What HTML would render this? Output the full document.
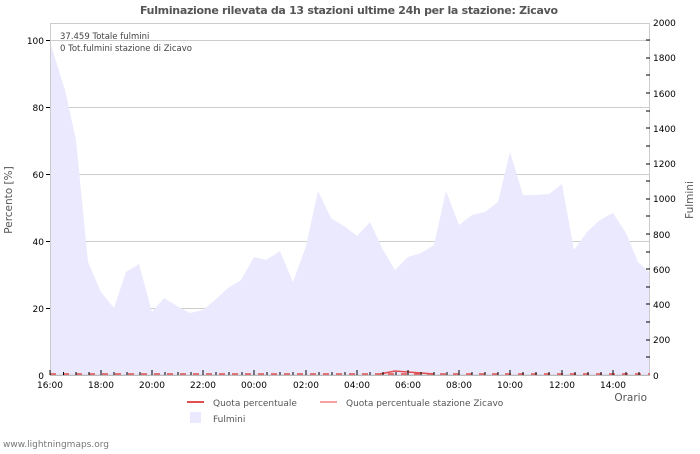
<!DOCTYPE html>
<html><head><style>
body{margin:0;background:#fff;width:700px;height:450px;overflow:hidden;font-family:"DejaVu Sans","Liberation Sans",sans-serif}
</style></head><body>
<svg width="700" height="450" xmlns="http://www.w3.org/2000/svg" font-family="DejaVu Sans, Liberation Sans, sans-serif">
<text x="349" y="14" text-anchor="middle" font-size="11" font-weight="bold" fill="#555" textLength="418">Fulminazione rilevata da 13 stazioni ultime 24h per la stazione: Zicavo</text>
<g stroke="#ccc" stroke-width="1">
<line x1="50" y1="40.5" x2="650" y2="40.5"/><line x1="50" y1="107.5" x2="650" y2="107.5"/><line x1="50" y1="174.5" x2="650" y2="174.5"/><line x1="50" y1="241.5" x2="650" y2="241.5"/><line x1="50" y1="308.5" x2="650" y2="308.5"/>
</g>
<polygon fill="#ebe9fd" points="50,375 50,42 65,90 76,140 88,262 101,292 114,308 126,272 139,264 152,312 164,298 177,306 190,313 203,310 215,300 228,288 241,280 254,257 266,260 280,251 293,282 306,246 318,191 331,218 344,226 357,236 370,222 382,248 395,270 408,257 421,253 434,245 446,191 459,225 472,215 485,212 498,202 510,152 523,195 536,195 549,194 562,184 574,250 587,232 600,220 613,213 626,233 638,262 649,272 649,375"/>
<rect x="50.5" y="23.5" width="599" height="351.5" fill="none" stroke="#ccc"/>
<g stroke="#e05050" stroke-width="1.5">
<line x1="50" y1="374" x2="650" y2="374" stroke-dasharray="6,7"/>
<polyline fill="none" points="380,374 395,371 408,372 421,373 434,374"/>
</g>
<line x1="50" y1="375.5" x2="650" y2="375.5" stroke="#bbb"/>
<g stroke="#000" stroke-width="1">
<line x1="50" y1="370" x2="50" y2="375"/><line x1="101" y1="370" x2="101" y2="375"/><line x1="152" y1="370" x2="152" y2="375"/><line x1="203" y1="370" x2="203" y2="375"/><line x1="254" y1="370" x2="254" y2="375"/><line x1="306" y1="370" x2="306" y2="375"/><line x1="357" y1="370" x2="357" y2="375"/><line x1="408" y1="370" x2="408" y2="375"/><line x1="459" y1="370" x2="459" y2="375"/><line x1="510" y1="370" x2="510" y2="375"/><line x1="562" y1="370" x2="562" y2="375"/><line x1="613" y1="370" x2="613" y2="375"/>
</g>
<g stroke="#000" stroke-width="1">
<line x1="63.5" y1="372" x2="63.5" y2="375"/><line x1="76" y1="372" x2="76" y2="375"/><line x1="89" y1="372" x2="89" y2="375"/><line x1="114" y1="372" x2="114" y2="375"/><line x1="127" y1="372" x2="127" y2="375"/><line x1="140" y1="372" x2="140" y2="375"/><line x1="165" y1="372" x2="165" y2="375"/><line x1="178" y1="372" x2="178" y2="375"/><line x1="191" y1="372" x2="191" y2="375"/><line x1="216" y1="372" x2="216" y2="375"/><line x1="229" y1="372" x2="229" y2="375"/><line x1="242" y1="372" x2="242" y2="375"/><line x1="267" y1="372" x2="267" y2="375"/><line x1="280" y1="372" x2="280" y2="375"/><line x1="293" y1="372" x2="293" y2="375"/><line x1="319" y1="372" x2="319" y2="375"/><line x1="332" y1="372" x2="332" y2="375"/><line x1="345" y1="372" x2="345" y2="375"/><line x1="370" y1="372" x2="370" y2="375"/><line x1="383" y1="372" x2="383" y2="375"/><line x1="396" y1="372" x2="396" y2="375"/><line x1="421" y1="372" x2="421" y2="375"/><line x1="434" y1="372" x2="434" y2="375"/><line x1="447" y1="372" x2="447" y2="375"/><line x1="472" y1="372" x2="472" y2="375"/><line x1="485" y1="372" x2="485" y2="375"/><line x1="498" y1="372" x2="498" y2="375"/><line x1="523" y1="372" x2="523" y2="375"/><line x1="536" y1="372" x2="536" y2="375"/><line x1="549" y1="372" x2="549" y2="375"/><line x1="575" y1="372" x2="575" y2="375"/><line x1="588" y1="372" x2="588" y2="375"/><line x1="601" y1="372" x2="601" y2="375"/><line x1="626" y1="372" x2="626" y2="375"/><line x1="639" y1="372" x2="639" y2="375"/>
<line x1="46" y1="40.5" x2="50" y2="40.5"/><line x1="46" y1="107.5" x2="50" y2="107.5"/><line x1="46" y1="174.5" x2="50" y2="174.5"/><line x1="46" y1="241.5" x2="50" y2="241.5"/><line x1="46" y1="308.5" x2="50" y2="308.5"/>
<line x1="646" y1="40" x2="650" y2="40"/><line x1="646" y1="58" x2="650" y2="58"/><line x1="646" y1="75" x2="650" y2="75"/><line x1="646" y1="93" x2="650" y2="93"/><line x1="646" y1="111" x2="650" y2="111"/><line x1="646" y1="128" x2="650" y2="128"/><line x1="646" y1="146" x2="650" y2="146"/><line x1="646" y1="164" x2="650" y2="164"/><line x1="646" y1="181" x2="650" y2="181"/><line x1="646" y1="199" x2="650" y2="199"/><line x1="646" y1="216" x2="650" y2="216"/><line x1="646" y1="234" x2="650" y2="234"/><line x1="646" y1="252" x2="650" y2="252"/><line x1="646" y1="269" x2="650" y2="269"/><line x1="646" y1="287" x2="650" y2="287"/><line x1="646" y1="304" x2="650" y2="304"/><line x1="646" y1="322" x2="650" y2="322"/><line x1="646" y1="340" x2="650" y2="340"/><line x1="646" y1="357" x2="650" y2="357"/>
</g>
<g font-size="9" fill="#000" text-anchor="end">
<text x="44" y="44">100</text><text x="44" y="111">80</text><text x="44" y="178">60</text><text x="44" y="245">40</text><text x="44" y="312">20</text><text x="44" y="379">0</text>
</g>
<g font-size="9" fill="#000">
<text x="653" y="26">2000</text><text x="653" y="61">1800</text><text x="653" y="97">1600</text><text x="653" y="132">1400</text><text x="653" y="167">1200</text><text x="653" y="202">1000</text><text x="653" y="238">800</text><text x="653" y="273">600</text><text x="653" y="308">400</text><text x="653" y="343">200</text><text x="653" y="379">0</text>
</g>
<g font-size="9" fill="#000" text-anchor="middle">
<text x="50" y="388">16:00</text><text x="101" y="388">18:00</text><text x="152" y="388">20:00</text><text x="203" y="388">22:00</text><text x="254" y="388">00:00</text><text x="306" y="388">02:00</text><text x="357" y="388">04:00</text><text x="408" y="388">06:00</text><text x="459" y="388">08:00</text><text x="510" y="388">10:00</text><text x="562" y="388">12:00</text><text x="613" y="388">14:00</text>
</g>
<text x="647" y="401" font-size="10.5" fill="#555" text-anchor="end">Orario</text>
<text x="12" y="200" font-size="10.5" fill="#555" text-anchor="middle" transform="rotate(-90 12 200)">Percento   [%]</text>
<text x="693" y="200" font-size="10.5" fill="#555" text-anchor="middle" transform="rotate(-90 693 200)">Fulmini</text>
<text x="60" y="39" font-size="8.5" fill="#444">37.459 Totale fulmini</text>
<text x="60" y="51" font-size="8.5" fill="#444">0 Tot.fulmini stazione di Zicavo</text>
<line x1="187" y1="402" x2="204" y2="402" stroke="#e05050" stroke-width="2"/>
<text x="213" y="406" font-size="9" fill="#555">Quota percentuale</text>
<line x1="320" y1="402" x2="337" y2="402" stroke="#f9a0a0" stroke-width="2"/>
<text x="346" y="406" font-size="9" fill="#555">Quota percentuale stazione Zicavo</text>
<rect x="190" y="412" width="11" height="11" fill="#ebe9fd"/>
<text x="213" y="422" font-size="9" fill="#555">Fulmini</text>
<text x="3" y="447" font-size="9" fill="#777">www.lightningmaps.org</text>
</svg>
</body></html>
